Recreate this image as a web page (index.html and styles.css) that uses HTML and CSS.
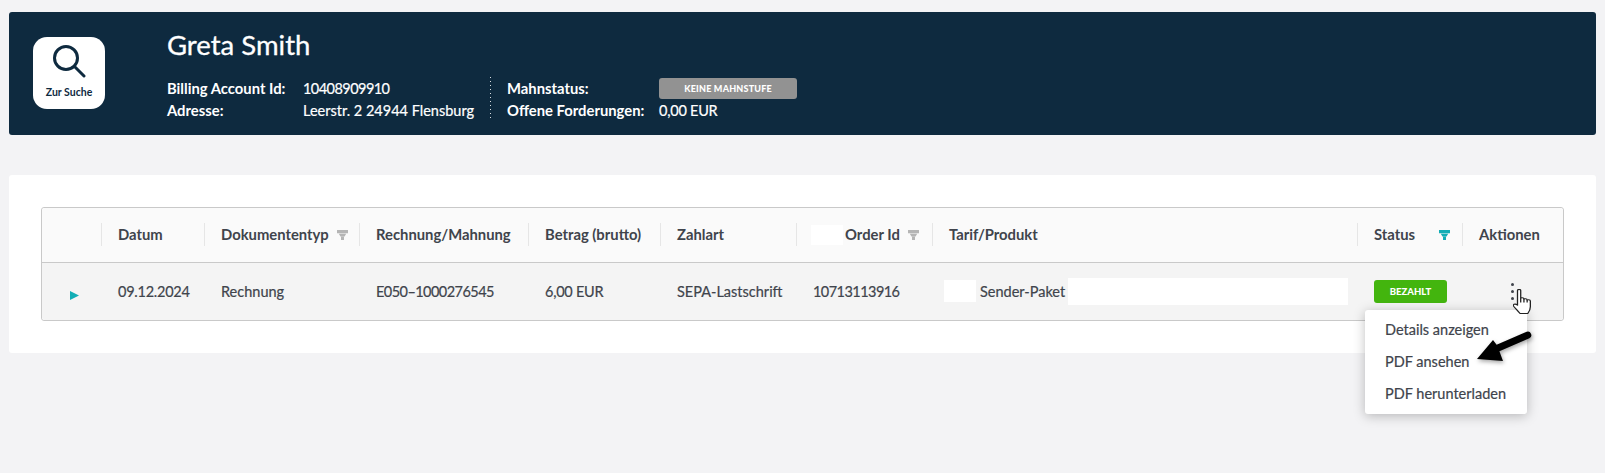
FILE: index.html
```html
<!DOCTYPE html>
<html lang="de">
<head>
<meta charset="utf-8">
<title>Greta Smith</title>
<link rel="stylesheet" href="styles.css">
</head>
<body>
<header class="banner">
  <a class="search-tile">
    <svg class="search-icon" width="36" height="34" viewBox="0 0 36 34"><circle cx="15" cy="14" r="11.5" fill="none" stroke="#0e2a3f" stroke-width="3"/><path d="M23.5 22.5 L33 32" stroke="#0e2a3f" stroke-width="3" stroke-linecap="round"/></svg>
    <span>Zur Suche</span>
  </a>
  <div class="customer">
    <h1>Greta Smith</h1>
    <div class="facts">
      <dl class="fact-group first">
        <dt>Billing Account Id:</dt><dd class="num">10408909910</dd>
        <dt>Adresse:</dt><dd>Leerstr. 2 24944 Flensburg</dd>
      </dl>
      <dl class="fact-group second">
        <dt>Mahnstatus:</dt><dd><span class="grey-pill">KEINE MAHNSTUFE</span></dd>
        <dt>Offene Forderungen:</dt><dd class="amount">0,00 EUR</dd>
      </dl>
    </div>
  </div>
</header>
<main class="card">
  <div class="table">
    <div class="row head">
      <div class="cell"></div>
      <div class="cell">Datum</div>
      <div class="cell">Dokumententyp<svg class="funnel" width="11" height="10" viewBox="0 0 11 10"><path d="M0 0H11V3.300H0ZM1.800 3.800H9.200L7.600 6.500H3.400ZM4 6.800H7V10H4Z" fill="#b5b5b5"/></svg></div>
      <div class="cell">Rechnung/Mahnung</div>
      <div class="cell">Betrag (brutto)</div>
      <div class="cell">Zahlart</div>
      <div class="cell order"><span class="mask mask-head"></span>Order Id<svg class="funnel" width="11" height="10" viewBox="0 0 11 10"><path d="M0 0H11V3.300H0ZM1.800 3.800H9.200L7.600 6.500H3.400ZM4 6.800H7V10H4Z" fill="#b5b5b5"/></svg></div>
      <div class="cell">Tarif/Produkt</div>
      <div class="cell status-head">Status<svg class="funnel" width="11" height="10" viewBox="0 0 11 10"><path d="M0 0H11V3.300H0ZM1.800 3.800H9.200L7.600 6.500H3.400ZM4 6.800H7V10H4Z" fill="#12adb5"/></svg></div>
      <div class="cell">Aktionen</div>
    </div>
    <div class="row body">
      <div class="cell expand"><svg width="9" height="9" viewBox="0 0 9 9"><path d="M0 0L9 4.500L0 9Z" fill="#12adb5"/></svg></div>
      <div class="cell amount">09.12.2024</div>
      <div class="cell">Rechnung</div>
      <div class="cell num">E050–1000276545</div>
      <div class="cell amount">6,00 EUR</div>
      <div class="cell">SEPA-Lastschrift</div>
      <div class="cell num">10713113916</div>
      <div class="cell product"><span class="mask mask-a"></span>Sender-Paket<span class="mask mask-b"></span></div>
      <div class="cell"><span class="green-pill">BEZAHLT</span></div>
      <div class="cell kebab"><i></i><i></i><i></i></div>
    </div>
  </div>
</main>
<ul class="menu">
  <li>Details anzeigen</li>
  <li>PDF ansehen</li>
  <li>PDF herunterladen</li>
</ul>
<svg class="hand" width="18" height="25" viewBox="1 1 14 24" preserveAspectRatio="none"><path d="M4.500 2.500C4.500 1 7 1 7 2.500V10C7 9 9.500 9 9.500 10.500V11C9.500 10 12 10 12 11.500V12C12 11 14.500 11 14.500 12.500V18C14.500 21 13.500 23 12.500 24.500H6.500C5 22.500 3 19.500 1.500 17.500C0.500 16 2.500 14.500 4.500 16.500Z" fill="#fff" stroke="#222" stroke-width="1" stroke-linejoin="round"/><path d="M7 10V14M9.500 11V14M12 12V14" stroke="#222" stroke-width="1"/></svg>
<svg class="arrow" width="70" height="44" viewBox="0 0 70 44"><path d="M3 30L19 11L22.600 15.800L52.600 2.800A3.500 3.500 0 0 1 55.400 9.200L25.400 22.200L29 32Z" fill="#000"/></svg>
</body>
</html>
```
FILE: styles.css
```css
* { box-sizing: border-box; }
html, body { margin: 0; height: 100%; }
body {
  background: #f3f3f5;
  font-family: "Lato", "Liberation Sans", sans-serif;
  font-size: 14.5px;
  color: #40444c;
  padding: 12px 9px 0;
  position: relative;
  overflow: hidden;
}
.banner {
  height: 123px;
  background: #0e2a3f;
  border-radius: 3px;
  color: #fff;
  display: flex;
  padding: 25px 0 0 24px;
}
.search-tile {
  width: 72px;
  height: 72px;
  background: #fff;
  border-radius: 14px;
  color: #0e2a3f;
  display: flex;
  flex-direction: column;
  align-items: center;
  padding-top: 7px;
  font-size: 10.500px;
  font-weight: 700;
}
.search-icon { margin-bottom: 8px; }
.customer { margin-left: 62px; margin-top: -7px; }
h1 {
  margin: 0;
  font-size: 27.500px;
  font-weight: 400;
  line-height: 30px;
  -webkit-text-stroke: .3px #fff;
}
.facts { display: flex; margin-top: 17px; }
.fact-group {
  display: grid;
  grid-auto-rows: 22px;
  margin: 0;
  align-items: center;
}
.fact-group dt { font-weight: 700; font-size: 14.800px; }
.fact-group dd { margin: 0; -webkit-text-stroke: .2px #fff; }
.num { letter-spacing: -.55px; }
.amount { letter-spacing: -.25px; }
.first {
  grid-template-columns: 136px auto;
  padding-right: 17px;
  background: linear-gradient(#d8dde0 1px, transparent 1px) right top / 1px 4px repeat-y;
}
.second { grid-template-columns: 152px auto; padding-left: 16px; }
.grey-pill {
  display: block;
  width: 138px;
  height: 21px;
  margin-top: 1px;
  background: #929292;
  border-radius: 3px;
  font-size: 9px;
  font-weight: 900;
  line-height: 21px;
  text-align: center;
  letter-spacing: .2px;
  -webkit-text-stroke: 0;
}
.card {
  margin-top: 40px;
  height: 178px;
  background: #fff;
  border-radius: 3px;
  padding: 32px;
}
.table {
  border: 1px solid #c9c9c9;
  border-radius: 3px;
  height: 114px;
}
.row {
  display: grid;
  grid-template-columns: 59px 103px 155px 169px 132px 136px 136px 425px 105px 101px;
  align-items: center;
}
.head {
  height: 55px;
  background: #fafafa;
  border-bottom: 1px solid #c9c9c9;
  font-weight: 700;
  font-size: 14.800px;
  border-radius: 3px 3px 0 0;
  padding-bottom: 1px;
}
.body {
  height: 57px;
  background: #f4f4f4;
  border-radius: 0 0 3px 3px;
  padding-bottom: 1px;
  -webkit-text-stroke: .2px #40444c;
}
.head .cell {
  height: 23px;
  line-height: 23px;
  padding-left: 16px;
  white-space: nowrap;
  display: flex;
  align-items: center;
}
.head .cell + .cell { border-left: 1px solid #e6e6e6; }
.body .cell { padding-left: 17px; white-space: nowrap; display: flex; align-items: center; }
.funnel { margin-left: 8px; }
.status-head .funnel { margin-left: 24px; }
.mask { display: block; background: #fff; }
.mask-head { width: 32px; height: 20px; margin-right: 2px; }
.head .order { padding-left: 14px; }
.mask-a { width: 32px; height: 22px; margin: 0 4px 0 -5px; }
.mask-b { width: 280px; height: 27px; margin-left: 3px; }
.body .expand { padding: 8px 0 0 28px; }
.green-pill {
  display: block;
  width: 73px;
  height: 23px;
  background: #43b50e;
  border-radius: 3px;
  color: #fff;
  font-size: 9.500px;
  font-weight: 900;
  line-height: 23px;
  text-align: center;
  -webkit-text-stroke: 0;
}
.body .kebab { flex-direction: column; align-items: flex-start; padding: 0 0 0 49px; gap: 4px; }
.kebab i { width: 3px; height: 3px; border-radius: 50%; background: #40444c; }
.menu {
  position: absolute;
  left: 1365px;
  top: 310px;
  width: 162px;
  height: 104px;
  margin: 0;
  padding: 4px 0 0 20px;
  list-style: none;
  background: #fff;
  border-radius: 3px;
  box-shadow: 0 2px 12px rgba(0,0,0,.25);
  font-size: 14.500px;
  -webkit-text-stroke: .2px #40444c;
}
.menu li { height: 32px; line-height: 32px; }
.hand { position: absolute; left: 1513px; top: 289px; }
.arrow { position: absolute; left: 1474px; top: 329px; filter: drop-shadow(1px 2px 2px rgba(0,0,0,.35)); }
```
